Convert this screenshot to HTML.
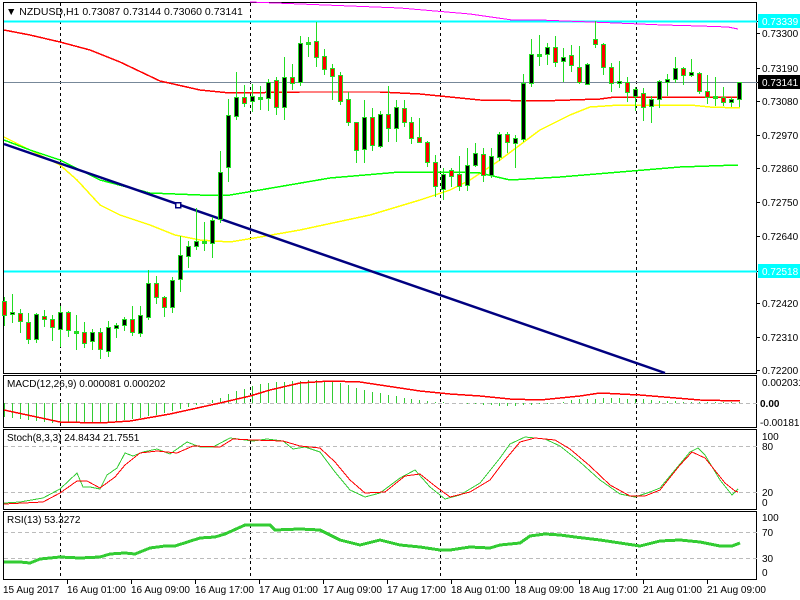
<!DOCTYPE html>
<html><head><meta charset="utf-8"><style>
html,body{margin:0;padding:0;background:#fff;width:800px;height:600px;overflow:hidden}
svg{display:block;font-family:"Liberation Sans",sans-serif;font-size:10px}
</style></head><body>
<svg id="s" width="800" height="600" xmlns="http://www.w3.org/2000/svg" shape-rendering="crispEdges">
<rect width="800" height="600" fill="#fff"/>
<g id="g"></g>
<rect x="758" y="14" width="42" height="14" fill="#00ffff"/>
<rect x="758" y="264" width="42" height="14" fill="#00ffff"/>
<rect x="758" y="75" width="42" height="14" fill="#000"/>
<g fill="#000">
<text x="6" y="15" font-size="10.5">▼ NZDUSD,H1  0.73087 0.73144 0.73060 0.73141</text>
<text x="762" y="25" fill="#fff">0.73339</text>
<text x="762" y="37">0.73300</text>
<text x="762" y="72">0.73190</text>
<text x="762" y="86" fill="#fff">0.73141</text>
<text x="762" y="105">0.73080</text>
<text x="762" y="139">0.72970</text>
<text x="762" y="172">0.72860</text>
<text x="762" y="206">0.72750</text>
<text x="762" y="240">0.72640</text>
<text x="762" y="275" fill="#fff">0.72518</text>
<text x="762" y="307">0.72420</text>
<text x="762" y="341">0.72310</text>
<text x="762" y="374">0.72200</text>
<text x="7" y="387">MACD(12,26,9) 0.000081 0.000202</text>
<text x="762" y="386">0.002031</text>
<text x="760" y="407" font-weight="bold">0.00</text>
<text x="760" y="426">-0.001819</text>
<text x="7" y="441">Stoch(8,3,3) 24.8434 21.7551</text>
<text x="762" y="440">100</text>
<text x="762" y="450">80</text>
<text x="762" y="496">20</text>
<text x="762" y="506">0</text>
<text x="7" y="523">RSI(13) 53.3272</text>
<text x="762" y="521">100</text>
<text x="762" y="536">70</text>
<text x="762" y="562">30</text>
<text x="762" y="576">0</text>
<text x="3" y="593">15 Aug 2017</text>
<text x="67" y="593">16 Aug 01:00</text>
<text x="131" y="593">16 Aug 09:00</text>
<text x="195" y="593">16 Aug 17:00</text>
<text x="259" y="593">17 Aug 01:00</text>
<text x="323" y="593">17 Aug 09:00</text>
<text x="387" y="593">17 Aug 17:00</text>
<text x="451" y="593">18 Aug 01:00</text>
<text x="515" y="593">18 Aug 09:00</text>
<text x="579" y="593">18 Aug 17:00</text>
<text x="643" y="593">21 Aug 01:00</text>
<text x="707" y="593">21 Aug 09:00</text>
</g>
</svg>
<script>
var NS="http://www.w3.org/2000/svg",g=document.getElementById("g");
function el(t,a){var e=document.createElementNS(NS,t);for(var k in a)e.setAttribute(k,a[k]);g.appendChild(e);return e}
function pl(pts,c,w,dash){el("polyline",{points:pts.map(function(p){return p.join(",")}).join(" "),fill:"none",stroke:c,"stroke-width":w||1,"stroke-dasharray":dash||"none"})}
function hl(y,x1,x2,c,w,d){el("line",{x1:x1,x2:x2,y1:y,y2:y,stroke:c,"stroke-width":w||1,"stroke-dasharray":d||"none"})}
[[2,373],[375,427],[429,509],[511,579]].forEach(function(p){el("rect",{x:3.5,y:p[0]+.5,width:753,height:p[1]-p[0],fill:"none",stroke:"#000"})});
[60,250,440,636].forEach(function(x){el("line",{x1:x+.5,x2:x+.5,y1:3,y2:579,stroke:"#000","stroke-dasharray":"3,3"})});
[33,68,82,101,135,168,202,236,271,303,337,370,21].forEach(function(y){hl(y+.5,757,760,"#000")});
[67,131,195,259,323,387,451,515,579,643,707].forEach(function(x){el("line",{x1:x+.5,x2:x+.5,y1:580,y2:584,stroke:"#000"})});
hl(21.5,4,757,"#00ffff",2);hl(271.5,4,757,"#00ffff",2);hl(82.5,4,757,"#778899",1);
hl(403.5,4,757,"#bbb",1,"4,3");hl(446.5,4,757,"#bbb",1,"4,3");hl(492.5,4,757,"#bbb",1,"4,3");hl(532.5,4,757,"#bbb",1,"4,3");hl(558.5,4,757,"#bbb",1,"4,3");
pl([[250,2],[400,8],[470,14],[512,20],[540,20],[616,23],[663,25],[700,26],[728,27],[738,29]],"#ff00ff");
pl([[4,30],[30,35],[60,42],[90,50],[120,62],[160,81],[200,90],[230,93],[300,92],[380,92],[420,94],[450,97],[480,100],[540,101],[600,99],[615,97],[740,97]],"#ff0000",1.5);
pl([[4,137],[30,150],[60,165],[77,180],[100,205],[120,215],[150,225],[175,235],[200,240],[230,242],[260,237],[300,230],[370,215],[420,200],[450,190],[470,180],[500,160],[520,145],[540,130],[570,115],[590,107],[620,105],[690,105],[710,107],[740,108]],"#ffff00",1.5);
pl([[4,140],[30,150],[60,160],[100,180],[150,193],[200,195],[230,195],[260,190],[330,178],[400,172],[450,172],[480,173],[510,180],[560,177],[620,172],[680,167],[738,165]],"#00ff00",1.5);
el("line",{x1:4,y1:144,x2:665,y2:373,stroke:"#000080","stroke-width":2.5,"shape-rendering":"auto"});
el("rect",{x:175.5,y:202.5,width:5,height:5,fill:"#fff",stroke:"#000080","stroke-width":1.5});
var C=[[301,315,297,326],[314,312,294,323],[313,321,309,333],[322,339,313,344],[339,314,313,343],[316,319,310,327],[319,327,315,341],[329,312,306,347],[312,330,311,337],[332,332,315,350],[332,343,322,348],[341,332,329,350],[332,349,328,359],[351,327,321,357],[328,325,323,338],[325,319,317,331],[319,332,306,336],[333,315,306,337],[317,283,270,320],[283,297,276,304],[297,307,296,317],[307,280,277,313],[279,255,236,292],[256,246,241,268],[246,241,208,250],[242,242,222,251],[243,220,217,258],[219,172,151,223],[167,115,99,182],[116,97,72,120],[97,103,85,107],[101,96,84,112],[98,98,86,110],[98,82,79,111],[80,107,77,115],[107,77,57,120],[77,83,64,90],[82,43,36,86],[43,43,37,57],[41,57,22,67],[56,69,49,75],[68,76,64,100],[75,101,72,105],[99,122,92,126],[122,150,122,163],[149,117,100,163],[117,145,108,151],[146,114,111,148],[114,128,86,142],[128,107,100,142],[108,122,100,127],[122,138,117,144],[137,142,118,143],[142,162,141,167],[162,186,155,197],[189,174,168,200],[170,176,168,187],[174,186,156,191],[185,165,148,191],[165,153,143,167],[154,175,148,182],[175,156,148,178],[157,134,132,161],[134,142,132,153],[143,138,135,168],[139,83,74,142],[83,54,39,87],[55,55,35,66],[54,47,43,65],[47,62,36,67],[61,57,48,82],[55,65,45,72],[67,82,46,84],[84,64,63,84],[39,44,21,48],[44,67,43,75],[67,83,63,92],[82,83,61,88],[82,92,77,102],[96,89,87,111],[93,107,88,121],[106,99,96,123],[99,81,80,108],[82,79,74,96],[79,68,57,83],[68,75,67,85],[75,72,59,77],[73,91,72,94],[91,97,75,104],[97,97,77,106],[97,102,87,106],[102,99,97,107],[99,82,82,107]];
var GC="#22dd22";
C.forEach(function(k,i){var x=Math.round(4+7.99*i);
el("rect",{x:x,y:k[2],width:1,height:Math.max(1,k[3]-k[2]),fill:GC});
var t=Math.min(k[0],k[1]),b=Math.max(k[0],k[1]);
if(b-t<2){el("rect",{x:x-2,y:t-1,width:5,height:3,fill:GC});if(b-t>=1)el("rect",{x:x-1,y:t,width:3,height:1,fill:"#000"});return}
el("rect",{x:x-2,y:t,width:5,height:b-t+1,fill:GC});
el("rect",{x:x-1,y:t+1,width:3,height:b-t-1,fill:k[1]<k[0]?"#000":"#ff0000"});
});
var H=[[3,417],[20,419],[40,422],[60,423],[90,423],[110,422],[130,419],[150,416],[170,411],[185,408],[200,404],[210,401],[220,398],[230,393],[240,390],[251,386],[267,383],[283,382],[315,380],[331,381],[347,385],[363,390],[379,393],[395,396],[411,399],[427,401],[443,402],[459,403],[475,404],[500,406],[530,405],[555,403],[580,399],[610,398],[640,399],[660,401],[700,402],[740,402]];
function interp(A,x){for(var i=0;i<A.length-1;i++){if(x>=A[i][0]&&x<=A[i+1][0]){var f=(x-A[i][0])/(A[i+1][0]-A[i][0]);return A[i][1]+f*(A[i+1][1]-A[i][1])}}return A[A.length-1][1]}
for(var i=0;i<93;i++){var x=Math.round(4+7.99*i),y=Math.round(interp(H,x));if(Math.abs(y-403)<1)continue;el("rect",{x:x,y:Math.min(y,403),width:1,height:Math.abs(y-403),fill:"#33cc33"})}
pl([[4,410],[60,422],[100,423],[130,421],[170,414],[220,403],[250,396],[270,390],[300,383],[330,381],[360,382],[380,385],[420,391],[450,394],[480,396],[500,398],[510,399],[540,400],[580,396],[600,393],[640,395],[700,400],[740,401]],"#ff0000",1.5);
pl([[4,503],[20,502],[43,498],[60,489],[77,473],[83,487],[90,487],[100,489],[107,475],[117,468],[125,453],[133,456],[143,452],[157,449],[170,454],[187,442],[200,447],[213,447],[230,438],[253,441],[267,439],[283,441],[293,449],[305,447],[320,452],[335,472],[350,490],[365,497],[380,493],[400,478],[415,470],[430,487],[445,499],[460,495],[480,483],[500,458],[510,444],[525,437],[545,439],[560,446],[580,462],[600,480],[620,494],[635,497],[650,492],[660,488],[675,470],[690,452],[698,448],[705,455],[720,480],[732,495],[738,489]],"#33cc33",1);
pl([[4,504],[43,502],[60,493],[77,481],[87,481],[100,488],[115,477],[125,465],[140,453],[157,451],[177,453],[193,446],[220,447],[233,439],[253,440],[283,441],[300,446],[320,448],[335,462],[350,480],[365,493],[385,492],[405,476],[420,474],[435,486],[450,497],[470,492],[490,480],[505,460],[520,442],[535,438],[555,440],[570,449],[590,466],[610,485],[630,496],[645,496],[660,490],[680,465],[692,452],[705,458],[725,483],[735,491],[738,492]],"#ff0000",1);
pl([[4,562],[20,562],[30,563],[40,559],[60,557],[80,558],[100,557],[110,554],[125,553],[135,554],[150,548],[165,546],[175,546],[200,538],[215,537],[225,534],[245,525],[270,525],[275,530],[300,529],[320,530],[340,540],[360,545],[380,540],[400,545],[420,547],[440,550],[450,550],[470,547],[490,548],[500,545],[520,543],[530,536],[545,534],[560,535],[575,537],[600,540],[620,543],[640,546],[660,541],[680,540],[700,542],[720,546],[732,546],[740,543]],"#33cc33",3);
</script>
</body></html>
